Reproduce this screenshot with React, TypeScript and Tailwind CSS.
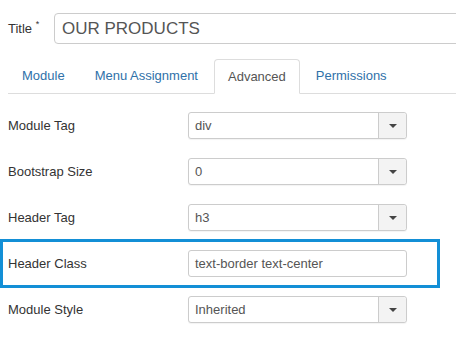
import React from 'react'

const Caret = () => (
  <span className="block w-0 h-0 border-x-[4px] border-x-transparent border-t-[4px] border-t-[#444]" />
)

const Select = ({ value }: { value: string }) => (
  <div className="flex w-[219px] h-[27px] border border-[#cccccc] rounded-[3px] bg-white shadow-[0_1px_1px_rgba(0,0,0,0.05)]">
    <div className="flex-1 flex items-center px-[6px] text-[#555] text-[13px]">{value}</div>
    <div className="w-[28px] flex items-center justify-center border-l border-[#cccccc] bg-[#f3f3f3] rounded-r-[3px]">
      <Caret />
    </div>
  </div>
)

const Row = ({ label, children }: { label: string; children: React.ReactNode }) => (
  <div className="flex items-center h-[27px]">
    <div className="w-[180px] shrink-0 text-[13px] text-[#333]">{label}</div>
    {children}
  </div>
)

export default function App() {
  const tabs = ['Module', 'Menu Assignment', 'Advanced', 'Permissions']

  return (
    <div className="w-[456px] h-[346px] overflow-hidden bg-white" style={{ fontFamily: '"Liberation Sans", Arial, sans-serif' }}>
      <div className="flex items-center pl-[8px] pt-[13px]">
        <div className="w-[46px] shrink-0 whitespace-nowrap text-[13px] text-[#333]">
          Title <span className="text-[9px] align-top relative top-[-1px]">*</span>
        </div>
        <div className="w-[480px] h-[31px] border border-[#cccccc] rounded-[4px] flex items-center px-[7px] text-[17px] text-[#555] shrink-0">
          OUR PRODUCTS
        </div>
      </div>

      <div className="flex ml-[8px] mt-[15px] h-[35px] border-b border-[#dddddd]">
        {tabs.map((t) => {
          const active = t === 'Advanced'
          return active ? (
            <div key={t} className="px-[13px] mr-[2px] -mb-px flex items-center text-[13px] text-[#555] bg-white border border-[#dddddd] border-b-white rounded-t-[4px]">
              {t}
            </div>
          ) : (
            <div key={t} className="px-[13px] mr-[2px] flex items-center text-[13px] text-[#3071a9] border border-transparent">
              {t}
            </div>
          )
        })}
      </div>

      <div className="flex flex-col gap-[19px] mt-[18px] pl-[8px]">
        <Row label="Module Tag"><Select value="div" /></Row>
        <Row label="Bootstrap Size"><Select value="0" /></Row>
        <Row label="Header Tag"><Select value="h3" /></Row>
        <div className="-ml-[8px] -my-[11px] w-[440px] border-[3px] border-[#138fd6] py-[8px] pl-[5px]">
          <Row label="Header Class">
            <div className="w-[219px] h-[27px] border border-[#cccccc] rounded-[3px] flex items-center px-[6px] text-[13px] text-[#555]">
              text-border text-center
            </div>
          </Row>
        </div>
        <Row label="Module Style"><Select value="Inherited" /></Row>
      </div>
    </div>
  )
}
